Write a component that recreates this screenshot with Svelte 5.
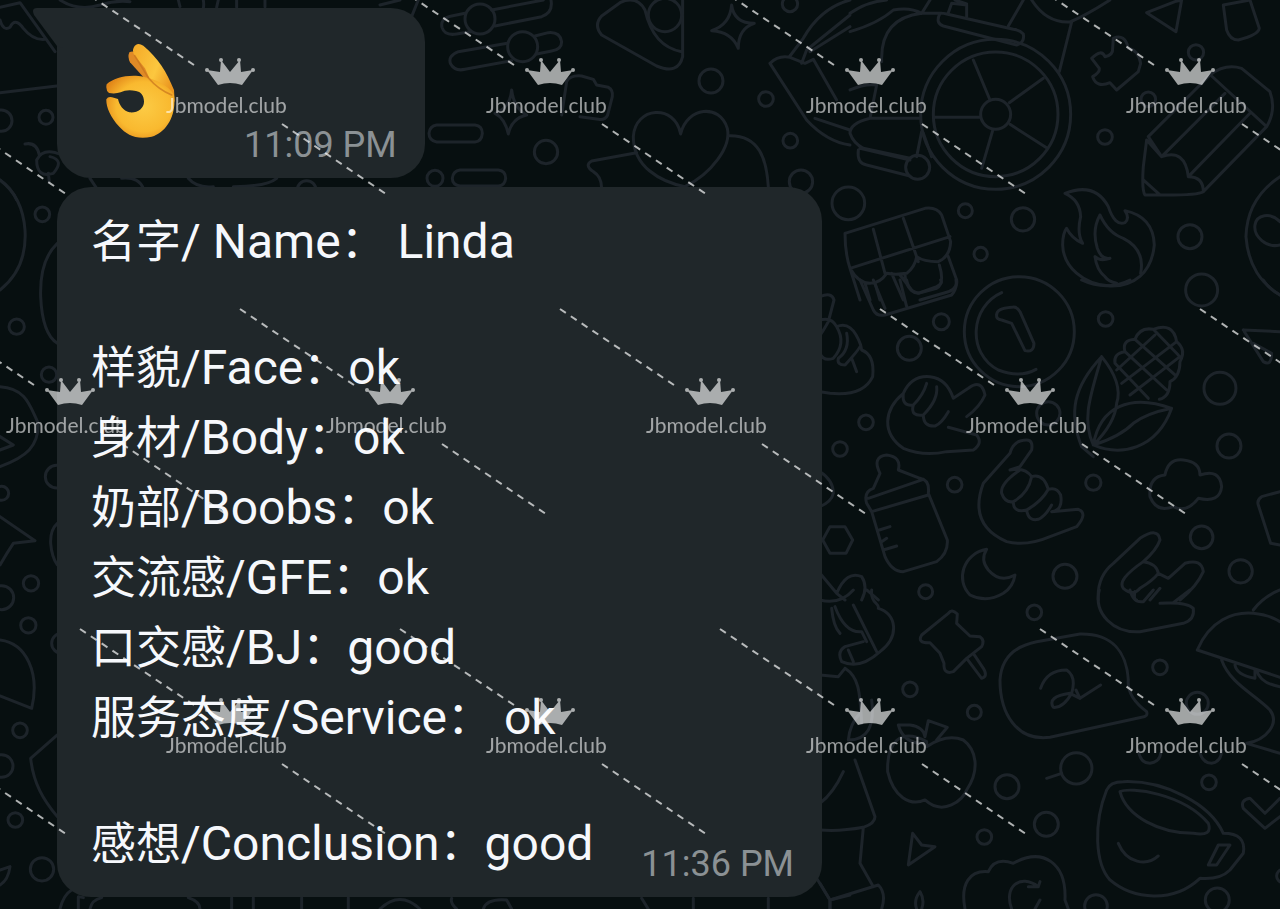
<script>
  /** @type {{ zh: string, en: string, value: string, spaced?: boolean }[][]} */
  const sections = [
    [{ zh: '名字', en: ' Name', value: 'Linda', spaced: true }],
    [
      { zh: '样貌', en: 'Face', value: 'ok' },
      { zh: '身材', en: 'Body', value: 'ok' },
      { zh: '奶部', en: 'Boobs', value: 'ok' },
      { zh: '交流感', en: 'GFE', value: 'ok' },
      { zh: '口交感', en: 'BJ', value: 'good' },
      { zh: '服务态度', en: 'Service', value: 'ok', spaced: true }
    ],
    [{ zh: '感想', en: 'Conclusion', value: 'good' }]
  ];

  // Wallpaper doodles, grouped by area. Units are thirds of a pixel.
  const doodles = [
    {
      x: 0,
      y: 0,
      paths: [
        'M0 22L60 8L165 155M0 60Q10 95 30 82Q45 50 70 85Q100 122 135 118M0 278L170 258',
        'M75 432Q110 425 118 465M185 465Q130 440 110 480Q110 535 160 520Q195 480 150 470M145 520L148 545M0 540Q35 565 50 600',
        'M180 0Q235 35 300 15Q345 0 390 5M535 0L540 20M610 0Q615 30 600 40M655 0L650 22M710 0V22M795 0V20M1140 15L1200 0M1255 0L1235 50',
        'M270 535L290 565M365 535Q415 530 430 565M565 535Q590 565 640 560M830 535Q800 560 700 560'
      ],
      circles: [[138, 352, 21], [4, 362, 32], [920, 570, 28]]
    },
    {
      x: 420,
      y: 0,
      paths: [
        'M135 40L95 48Q60 55 66 82Q74 108 110 102L150 95M215 30L370 0M225 78L365 50Q400 38 393 0',
        'M262 130L115 155Q82 168 92 192Q105 215 135 208L275 182M345 108L385 98Q420 95 425 125Q425 148 395 153L350 162',
        'M600 8L545 48Q520 75 545 105L710 198Q775 225 788 170V0M600 8Q650-15 675 30Q700 140 785 155',
        'M935 15Q942 70 1003 70Q955 85 955 145Q935 95 875 92Q930 75 935 15Z',
        'M425 345L440 245Q450 225 485 228L520 238L530 255L565 262Q580 270 577 290L563 345Q555 362 535 358L480 350',
        'M275 270Q282 325 320 345Q275 355 265 402Q255 355 225 340Q270 325 275 270Z',
        'M50 375H165Q187 378 187 400Q185 424 165 426H50Q27 422 27 400Q29 378 50 375ZM120 510H235Q257 513 257 535Q255 556 235 558H120Q97 555 97 535Q99 513 120 510Z',
        'M782 402C765 310 645 320 640 410C640 500 720 545 795 560C875 520 935 440 922 385C900 310 800 320 782 402Z',
        'M650 458L515 483Q492 495 520 515Q545 530 545 565M928 407C1020 405 1040 480 1045 560',
        'M1110 168L1150 115Q1200 25 1290 0M1050 190Q1075 165 1110 172L1155 190L1180 178L1250 300M1050 190L1160 360Q1220 425 1290 435M1170 155L1290 80M1185 355L1290 390M1145 190L1160 150L1290 45'
      ],
      circles: [[180, 57, 45], [308, 140, 45], [735, 45, 50], [873, 243, 36], [1038, 297, 22], [378, 456, 35], [45, 535, 24], [1111, 422, 22], [1143, 545, 35], [1110, 12, 23]]
    },
    {
      x: 850,
      y: 0,
      paths: [
        'M0 40Q50 5 110 0M0 95Q85 70 130 30Q180 20 215 40M95 185Q90 55 215 40L275 40M215 40L240 0M270 40Q255 70 280 78L500 135Q525 128 520 102Q510 90 490 88L290 42Q275 38 270 40Z',
        'M295 38L305 10L350 15V50M315 0L350 12M475 78L520 0M545 0Q590 70 660 66Q710 45 780 0M665 66L628 215',
        'M370 180L420 300M580 235L478 308M250 352H392M428 392L395 505M480 373L592 445',
        'M80 255L60 355Q0 370 0 400Q10 430 40 445L180 475M0 270Q45 250 80 255M60 355L210 355M25 450Q20 490 50 495L180 528M30 445L180 480M215 395L200 470M220 400L245 470',
        'M890 38L975 5L995 0L978 95ZM1120 15L1200 0L1228 85Q1225 105 1165 120Q1140 120 1130 90Z',
        'M725 175Q755 145 765 170Q790 165 788 145L790 115Q825 100 835 145Q865 150 872 190L865 215L800 270L780 248Q740 265 728 230Q750 218 748 205Z',
        'M895 410L1080 225Q1125 190 1175 205L1260 275Q1280 330 1250 380L1060 575Q1045 585 950 585H885Q875 570 880 500L890 420L935 470L1125 280M895 410L935 470Q1005 445 1015 530Q1060 530 1060 575M1015 530L1200 340M1085 228L1250 380M880 540L930 585',
        'M-15 700L225 625Q260 620 275 645L302 725Q300 770 265 785Q220 785 200 770Q195 800 170 820Q135 825 110 820Q90 850 60 850Q25 850 0 805Q-15 760-15 700M0 805L300 710M70 688L105 820M160 655L205 785M165 820Q165 870 205 880L260 865Q285 850 268 795M125 820L160 900M150 825L185 870M295 770L320 840Q325 870 280 880L210 900M45 850L60 900M75 850L90 900M0 805L30 900',
        'M645 580Q735 545 775 620Q795 680 825 668Q840 655 825 632Q910 650 913 735C905 820 850 860 780 858C700 855 640 800 638 735Q638 700 650 685Q665 715 698 730Q680 700 692 650Q690 600 645 580Z',
        'M750 645Q775 700 820 715C870 740 880 780 872 820M750 645Q725 690 742 745Q755 780 780 775Q750 785 735 770Q740 810 765 830Q775 845 800 850',
        'M1290 530C1230 570 1190 630 1188 710C1195 800 1235 850 1290 885M1290 735C1250 745 1210 710 1215 675C1220 645 1260 635 1290 665'
      ],
      circles: [[437, 343, 225], [437, 343, 187], [437, 343, 45], [765, 411, 22], [1038, 157, 23], [895, 298, 22], [-5, 610, 49], [346, 632, 21], [519, 658, 35], [392, 762, 20], [1020, 710, 36], [1055, 870, 48], [203, 502, 36]]
    },
    {
      x: 820,
      y: 280,
      paths: [
        'M545 38C450 80 440 220 535 270Q600 295 648 268M530 105Q530 85 575 82Q590 78 600 95L642 190Q642 218 615 212L575 130L545 120Q528 118 530 105Z',
        'M120 0L160 90Q170 110 195 105L395 45Q412 25 408 0M240 0L260 80M160 0L195 85M260 0Q270 45 300 38L350 20Q370 10 362 0M785 0Q860 35 930 0',
        'M0 50Q35 35 42 60L25 125Q5 160 0 165M0 120Q35 110 50 140Q95 120 122 195L125 210Q165 225 158 290Q130 350 30 340L0 335M50 140Q80 190 40 235Q10 245 0 220M80 160Q90 210 55 235Q50 255 75 255Q125 200 122 195M95 235L110 275',
        'M250 340C190 390 185 460 250 505Q310 530 380 515L460 510Q490 490 470 465L385 442M250 340Q275 285 330 290Q380 295 400 355L445 325Q485 295 495 345Q480 380 440 410M250 340Q245 380 280 375Q310 345 320 310M280 375Q270 410 310 405Q355 360 350 320M310 405Q310 440 345 438Q365 430 385 395',
        'M845 230Q910 310 890 370Q885 430 820 495M845 230C760 320 745 400 785 500L820 530M845 230C810 350 785 420 820 495M820 495C840 380 930 340 1055 385C1010 510 900 530 820 495M820 495Q900 470 940 430Q980 400 1055 385',
        'M885 250Q880 220 915 215Q905 180 945 178Q960 140 1000 148Q1060 125 1070 185Q1100 210 1080 245Q1080 290 1050 305Q1050 350 1018 358M885 250L985 355M915 215L1040 330M945 178L1065 285M1000 148L1075 225M905 310L1070 185M890 270L1005 165M930 345L1080 230',
        'M620 480Q580 480 570 520L490 610C460 690 480 750 560 785Q620 800 690 770L770 740Q805 700 775 688L695 695Q730 690 722 645Q710 620 685 628Q670 580 635 590Q615 560 570 570L600 560L635 510Q640 480 620 480ZM600 570Q540 610 545 640Q555 670 580 665Q625 640 635 590M580 665Q580 700 620 690Q665 665 685 628M620 690Q625 725 655 718Q675 710 695 675',
        'M140 670Q130 635 160 625L180 580Q155 530 200 525Q245 530 235 570L300 595Q330 600 325 640L382 780Q385 820 350 845L250 875Q215 875 195 830L155 695ZM145 655L310 598M155 695L325 645M178 750L210 740M185 785L200 775M190 810L230 798',
        'M500 808C430 820 405 900 450 945Q500 970 550 940Q580 920 585 885Q540 910 505 870Q480 840 500 808Z',
        'M1035 585Q1045 535 1090 540Q1140 545 1140 585Q1200 565 1205 620Q1200 670 1135 655Q1100 700 1060 680Q1010 700 990 650Q985 590 1035 585Z',
        'M30 740H75L98 780L78 820H30L8 780ZM0 575Q40 600 40 640Q35 665 0 680M1380 635L1325 650Q1310 660 1315 675L1352 790L1380 795M1270 150L1380 155M1270 150L1330 245Q1355 260 1355 220L1300 190M1330 0Q1350 30 1380 45',
        'M835 960Q830 890 880 850L960 775Q1015 740 1020 780Q1010 810 970 845Q1010 850 1015 880L1045 895L1095 850Q1145 835 1150 875Q1130 920 1080 960M970 845Q890 900 910 925Q940 950 960 925Q1000 900 1015 880M945 935Q940 960 950 960M1020 925L990 960M0 880L50 940Q80 870 125 890Q145 920 125 960M50 940L75 960M140 930L175 960'
      ],
      circles: [[598, 155, 165], [268, 205, 36], [364, 125, 24], [857, 117, 22], [1200, 325, 48], [1227, 498, 36], [1145, 772, 34], [1262, 874, 35], [735, 889, 36], [820, 608, 23], [404, 614, 22], [138, 427, 22], [60, 507, 22], [685, 400, 35], [317, 935, 21]]
    },
    {
      x: 820,
      y: 590,
      paths: [
        'M155 0C150 40 180 40 175 55C230 70 240 140 180 185Q120 240 65 215Q50 185 75 170L130 155M100 45L170 185M35 55Q40 110 60 130M45 50Q75 130 125 125L140 155M85 180L100 215M0 30Q60 45 100 0M75 235C115 260 120 300 125 400M0 255L55 260L75 235M155 330Q170 450 85 450Q90 400 120 370M105 510L165 680Q165 700 130 712Q60 725 0 720M0 640Q40 610 70 545M130 712L120 820L160 890M0 880L30 930V957M30 930L175 885Q200 910 185 957',
        'M385 70Q395 55 412 72L410 100L450 138L480 140Q495 150 485 170L440 205L400 245Q370 255 372 220L360 190L330 158Q290 160 305 135ZM440 205L485 265Q505 260 490 235L460 190',
        'M540 270C545 190 600 165 650 155L780 132C880 130 920 190 925 270Q920 320 980 365Q985 380 965 382L690 442C590 455 540 370 540 270ZM662 295Q680 240 740 240Q770 260 755 310Q730 355 700 352Q680 320 750 310L780 325L842 285M780 325L768 300',
        'M838 0C820 70 880 130 960 125L1090 100Q1125 90 1120 55Q1100 35 1020 40L1060 38L1110 0M930 0Q940 40 970 35L1000 0',
        'M1132 180C1170 90 1240 65 1300 70Q1350 75 1380 95M1132 180L1380 262M1300 60Q1330 20 1380 0M1205 210C1230 280 1300 310 1350 360C1380 400 1340 450 1280 460L1380 490M1245 225Q1250 255 1305 265V240M1310 240Q1320 280 1380 290',
        'M320 455C240 410 200 460 203 545C220 620 270 650 315 630C370 680 430 630 440 600C480 540 470 480 430 450Q380 430 320 470ZM310 460Q250 460 235 405H270Q310 410 315 440L325 392L382 412L350 450',
        'M680 565L725 550M265 825L278 730L305 765L345 770ZM1270 655Q1260 630 1290 625L1335 670L1380 625M1270 655L1335 715L1380 680',
        'M860 600C820 700 825 820 870 870C940 930 1060 940 1140 865Q1200 870 1230 840L1270 790Q1280 730 1210 730C1170 640 1030 570 910 575Q870 575 860 600ZM900 605C930 590 1090 610 1165 700Q1180 740 1120 730C1020 730 920 680 900 605ZM895 760C920 820 980 830 1015 798M1195 765H1230L1190 825H1165Z',
        'M435 957C420 880 450 840 505 845Q525 800 580 820C670 770 740 820 735 930L745 957M575 957C550 890 600 850 655 890M655 890L660 875M655 890L625 890M660 930L645 957M290 957Q280 930 300 905Q315 930 305 957M955 480Q960 520 990 520Q1020 515 1022 490M1140 490Q1150 520 1175 520Q1205 515 1205 480'
      ],
      circles: [[643, 67, 22], [1020, 232, 22], [270, 298, 22], [463, 367, 21], [561, 590, 36], [769, 535, 47], [679, 703, 36], [493, 741, 22], [1167, 577, 22], [828, 948, 34], [1192, 930, 36], [1132, 340, 33], [1390, 858, 20]]
    },
    {
      x: 0,
      y: 180,
      paths: ['M0 0C40 30 70 80 75 150C80 230 50 290 0 330M172 190C130 230 120 290 122 350C125 420 140 470 172 490M0 620C80 625 90 680 115 730C115 800 80 830 0 860M0 770L40 795L0 810'],
      circles: [[127, 103, 22], [50, 440, 23], [147, 584, 23]]
    },
    {
      x: 0,
      y: 380,
      paths: ['M0 410L105 482L40 490Q20 520 0 555M172 430Q150 450 152 490Q155 530 172 555'],
      circles: [[170, 290, 34], [5, 340, 21], [93, 610, 23], [5, 653, 36], [85, 736, 23]]
    },
    {
      x: 0,
      y: 600,
      paths: [
        'M0 120C80 130 120 220 95 325L0 288M172 405L92 475C100 550 130 600 172 650M0 810L30 800Q25 840 0 855',
        'M180 927Q190 885 215 870M235 927V890L250 893M270 927Q275 900 305 893M565 893Q600 905 600 927M695 893V927M760 893V927M905 893V927M1045 893V927M1140 927Q1200 870 1260 927'
      ],
      circles: [[60, 391, 22], [5, 498, 34], [46, 660, 22], [126, 808, 35], [185, 130, 30]]
    },
    {
      x: 430,
      y: 680,
      paths: ['M65 655Q60 670 80 687M160 687Q170 655 230 660L245 687M635 655L655 687M790 655V687M1015 655V687M1160 595L1200 660V687M1200 660L1260 645'],
      circles: []
    }
  ];
</script>

<main class="chat">
  <svg class="wallpaper" aria-hidden="true">
    {#each doodles as group}
      <g transform="translate({group.x} {group.y}) scale(0.3333)">
        {#each group.paths as d}
          <path {d} />
        {/each}
        {#each group.circles as [cx, cy, r]}
          <circle {cx} {cy} {r} />
        {/each}
      </g>
    {/each}
  </svg>

  <article class="bubble first">
    <svg class="tail" viewBox="0 0 30 40" aria-hidden="true">
      <path d="M4 0H30V40L24 38L1 7Q-2 0 4 0Z" />
    </svg>
    <svg class="emoji" viewBox="45 24 216 288" role="img" aria-label="OK hand">
      <defs>
        <radialGradient id="skin" cx="0.55" cy="0.5" r="0.62">
          <stop offset="0" stop-color="#fccb45" />
          <stop offset="0.65" stop-color="#f9b92f" />
          <stop offset="1" stop-color="#e28719" />
        </radialGradient>
        <linearGradient id="finger" x1="0" y1="0" x2="1" y2="0.6">
          <stop offset="0" stop-color="#f4a927" />
          <stop offset="0.6" stop-color="#fcc73f" />
          <stop offset="1" stop-color="#ea951f" />
        </linearGradient>
      </defs>
      <path fill="#e08a26" d="M118 52Q132 45 146 60L192 136L174 142L120 82Q112 66 118 52Z" />
      <path fill="url(#finger)" d="M131 38Q140 20 160 32C205 70 230 110 252 165L254 200L222 180L185 145L165 100L133 60Q126 48 131 38Z" />
      <path
        fill="url(#skin)"
        d="M50 148C70 130 105 120 145 123C185 127 238 150 252 180C260 240 230 292 185 305C140 315 110 300 88 275C60 245 48 215 49 193Q54 184 66 187L84 192C88 210 100 228 118 232C142 235 162 220 162 200C162 182 152 170 138 168C118 164 104 166 92 172Q76 177 57 174Q46 166 50 148Z"
      />
      <path class="crease" d="M134 62L176 130Q205 164 245 180" />
    </svg>
    <time>11:09 PM</time>
  </article>

  <article class="bubble">
    <div class="review">
      {#each sections as rows}
        <div class="section">
          {#each rows as row}
            <p><span class="zh">{row.zh}</span>/{row.en}<span class="zh">：</span>{row.spaced ? ' ' : ''}{row.value}</p>
          {/each}
        </div>
      {/each}
    </div>
    <time>11:36 PM</time>
  </article>

  <svg class="watermark" aria-hidden="true">
    <defs>
      <g id="stamp">
        <path class="dashes" d="M-150-83L-36-7M52 52L156 122" />
        <g class="crown">
          <path d="M-23-2L-10 0L-9-12L0 0L10-12L11 0L23-2L12 13Q0 9-12 13Z" />
          <circle cx="-23" cy="-2" r="2" />
          <circle cx="-9" cy="-12" r="2" />
          <circle cx="9" cy="-12" r="2" />
          <circle cx="23" cy="-2" r="2" />
        </g>
        <text x="-64" y="41">Jbmodel.club</text>
      </g>
      <pattern id="stamps" width="320" height="640" patternUnits="userSpaceOnUse">
        <use href="#stamp" x="230" y="72" />
        <use href="#stamp" x="-90" y="72" />
        <use href="#stamp" x="70" y="392" />
        <use href="#stamp" x="390" y="392" />
        <use href="#stamp" x="230" y="712" />
      </pattern>
    </defs>
    <rect width="100%" height="100%" fill="url(#stamps)" />
  </svg>
</main>

<style>
  :global(body) {
    margin: 0;
    background: #070f10;
  }

  .chat {
    position: relative;
    display: flex;
    flex-direction: column;
    align-items: flex-start;
    gap: 9px;
    box-sizing: border-box;
    min-height: 100vh;
    padding: 8px 57px 12px;
    overflow: hidden;
    background: #070f10;
    font-family: Roboto, 'Noto Sans CJK SC', sans-serif;
  }

  .wallpaper,
  .watermark {
    position: absolute;
    inset: 0;
    width: 100%;
    height: 100%;
    pointer-events: none;
  }

  .wallpaper {
    fill: none;
    stroke: #1d242a;
    stroke-width: 9;
    stroke-linecap: round;
    stroke-linejoin: round;
  }

  .bubble {
    position: relative;
    display: flex;
    align-items: flex-end;
    gap: 48px;
    padding: 20px 28px 12px 34px;
    border-radius: 34px;
    background: #20272a;
    color: #f6f8fc;
  }

  .bubble.first {
    gap: 67px;
    padding: 35px 28px 12px 48px;
    border-top-left-radius: 0;
  }

  .tail {
    position: absolute;
    top: 0;
    left: -24px;
    width: 30px;
    height: 40px;
    fill: #20272a;
  }

  .emoji {
    width: 72px;
    height: 96px;
    margin-bottom: 27px;
  }

  .crease {
    fill: none;
    stroke: #c8741c;
    stroke-width: 5;
    stroke-linecap: round;
    opacity: 0.7;
  }

  time {
    color: #8b9194;
    font-size: 36px;
    line-height: 42px;
    white-space: nowrap;
  }

  .review {
    display: flex;
    flex-direction: column;
    gap: 56px;
    margin-bottom: 6px;
  }

  p {
    margin: 0;
    font-size: 48px;
    line-height: 70px;
    white-space: pre-wrap;
  }

  .zh {
    font-family: 'Noto Sans CJK SC', sans-serif;
    font-size: 45px;
    line-height: 1;
  }

  .crown {
    fill: #fff;
    opacity: 0.62;
  }

  .dashes {
    fill: none;
    stroke: #fff;
    stroke-width: 2;
    stroke-dasharray: 7 6;
    opacity: 0.68;
  }

  .watermark text {
    fill: #fff;
    fill-opacity: 0.58;
    font-family: Lato, sans-serif;
    font-size: 21px;
  }
</style>
